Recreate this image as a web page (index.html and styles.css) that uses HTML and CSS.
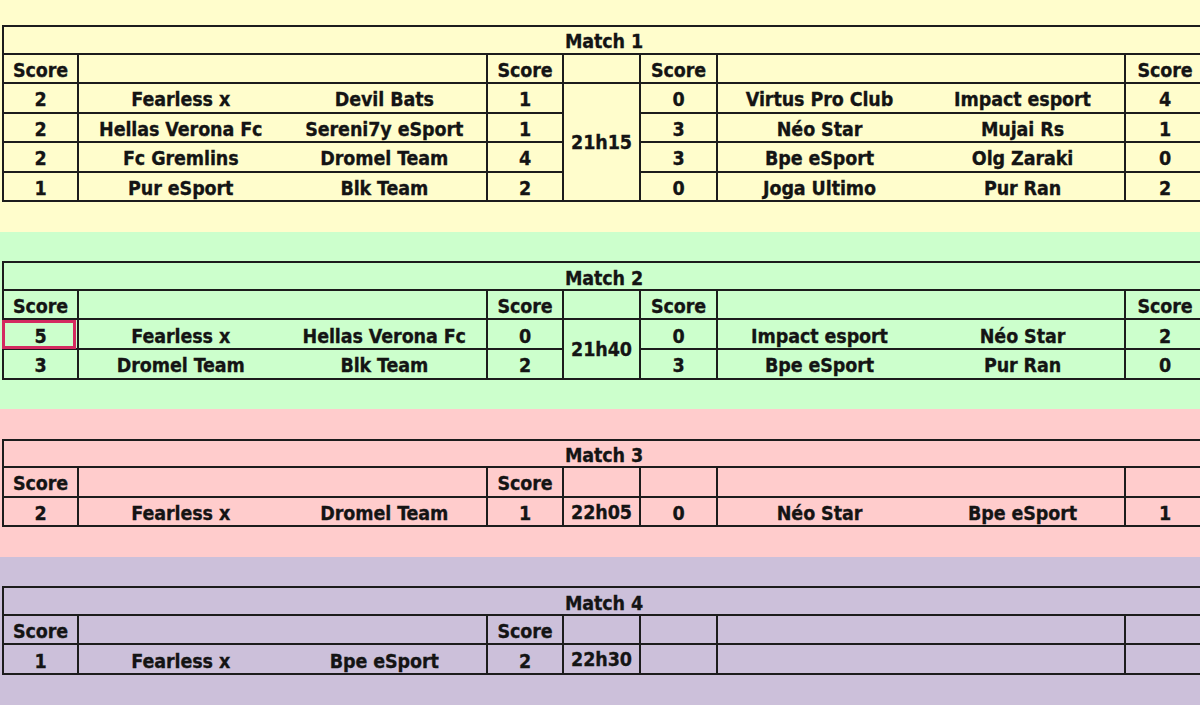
FILE: index.html
```html
<!DOCTYPE html>
<html lang="fr">
<head>
<meta charset="utf-8">
<title>Matchs</title>
<link rel="stylesheet" href="styles.css">
</head>
<body>
<section class="band yellow first">
  <div class="sheet">
    <div class="title">Match 1</div>
    <div class="c">Score</div><div class="c"></div><div class="c">Score</div><div class="c"></div><div class="c">Score</div><div class="c"></div><div class="c">Score</div>

    <div class="c">2</div><div class="c pair"><span>Fearless x</span><span>Devil Bats</span></div><div class="c">1</div><div class="c time span4">21h15</div><div class="c">0</div><div class="c pair"><span>Virtus Pro Club</span><span>Impact esport</span></div><div class="c">4</div>
    <div class="c">2</div><div class="c pair"><span>Hellas Verona Fc</span><span>Sereni7y eSport</span></div><div class="c">1</div><div class="c">3</div><div class="c pair"><span>Néo Star</span><span>Mujai Rs</span></div><div class="c">1</div>
    <div class="c">2</div><div class="c pair"><span>Fc Gremlins</span><span>Dromel Team</span></div><div class="c">4</div><div class="c">3</div><div class="c pair"><span>Bpe eSport</span><span>Olg Zaraki</span></div><div class="c">0</div>
    <div class="c">1</div><div class="c pair"><span>Pur eSport</span><span>Blk Team</span></div><div class="c">2</div><div class="c">0</div><div class="c pair"><span>Joga Ultimo</span><span>Pur Ran</span></div><div class="c">2</div>
  </div>
</section>

<section class="band green">
  <div class="sheet">
    <div class="title">Match 2</div>
    <div class="c">Score</div><div class="c"></div><div class="c">Score</div><div class="c"></div><div class="c">Score</div><div class="c"></div><div class="c">Score</div>

    <div class="c sel">5</div><div class="c pair"><span>Fearless x</span><span>Hellas Verona Fc</span></div><div class="c">0</div><div class="c time span2">21h40</div><div class="c">0</div><div class="c pair"><span>Impact esport</span><span>Néo Star</span></div><div class="c">2</div>
    <div class="c">3</div><div class="c pair"><span>Dromel Team</span><span>Blk Team</span></div><div class="c">2</div><div class="c">3</div><div class="c pair"><span>Bpe eSport</span><span>Pur Ran</span></div><div class="c">0</div>
  </div>
</section>

<section class="band pink">
  <div class="sheet">
    <div class="title">Match 3</div>
    <div class="c">Score</div><div class="c"></div><div class="c">Score</div><div class="c"></div><div class="c"></div><div class="c"></div><div class="c"></div>

    <div class="c">2</div><div class="c pair"><span>Fearless x</span><span>Dromel Team</span></div><div class="c">1</div><div class="c time">22h05</div><div class="c">0</div><div class="c pair"><span>Néo Star</span><span>Bpe eSport</span></div><div class="c">1</div>
  </div>
</section>

<section class="band purple">
  <div class="sheet">
    <div class="title">Match 4</div>
    <div class="c">Score</div><div class="c"></div><div class="c">Score</div><div class="c"></div><div class="c"></div><div class="c"></div><div class="c"></div>

    <div class="c">1</div><div class="c pair"><span>Fearless x</span><span>Bpe eSport</span></div><div class="c">2</div><div class="c time">22h30</div><div class="c"></div><div class="c"></div><div class="c"></div>
  </div>
</section>
</body>
</html>
```

FILE: styles.css
```css
:root {
  --r: 29.55px;
  --line: #1c1c1c;
}

html, body {
  margin: 0;
  padding: 0;
}

body {
  width: 1200px;
  height: 705px;
  overflow: hidden;
  font-family: "DejaVu Sans Condensed", "DejaVu Sans", sans-serif;
  font-stretch: condensed;
  font-weight: bold;
  font-size: 19.5px;
  letter-spacing: -0.1px;
  color: #141414;
  -webkit-text-stroke: 0.3px #141414;
}

.band {
  padding: var(--r) 0;
}

.band.first {
  padding-top: 25px;
}

.yellow { background: #fffdcc; }
.green  { background: #ccffcc; }
.pink   { background: #ffcccc; }
.purple { background: #ccc0da; }

.sheet {
  display: grid;
  grid-template-columns: 75px 409px 76px 77px 77px 408px 80px;
  grid-template-rows: calc(var(--r) - 2px);
  grid-auto-rows: var(--r);
  margin-left: 2px;
  width: max-content;
  border-top: 2px solid var(--line);
  border-left: 2px solid var(--line);
}

.title,
.c {
  display: flex;
  align-items: center;
  justify-content: center;
  box-sizing: border-box;
  padding-top: 4px;
  border-right: 2px solid var(--line);
  border-bottom: 2px solid var(--line);
  white-space: nowrap;
}

.title {
  grid-column: 1 / -1;
}

.pair {
  justify-content: stretch;
}

.pair span {
  flex: 1 1 0;
  text-align: center;
}

.time {
  padding-top: 1px;
}

.span4 { grid-row: span 4; }
.span2 { grid-row: span 2; }

.sel {
  position: relative;
}

.sel::after {
  content: "";
  position: absolute;
  left: -2px;
  top: 0;
  right: 1px;
  bottom: -1px;
  border: 3px solid #d42a60;
  pointer-events: none;
}
```
